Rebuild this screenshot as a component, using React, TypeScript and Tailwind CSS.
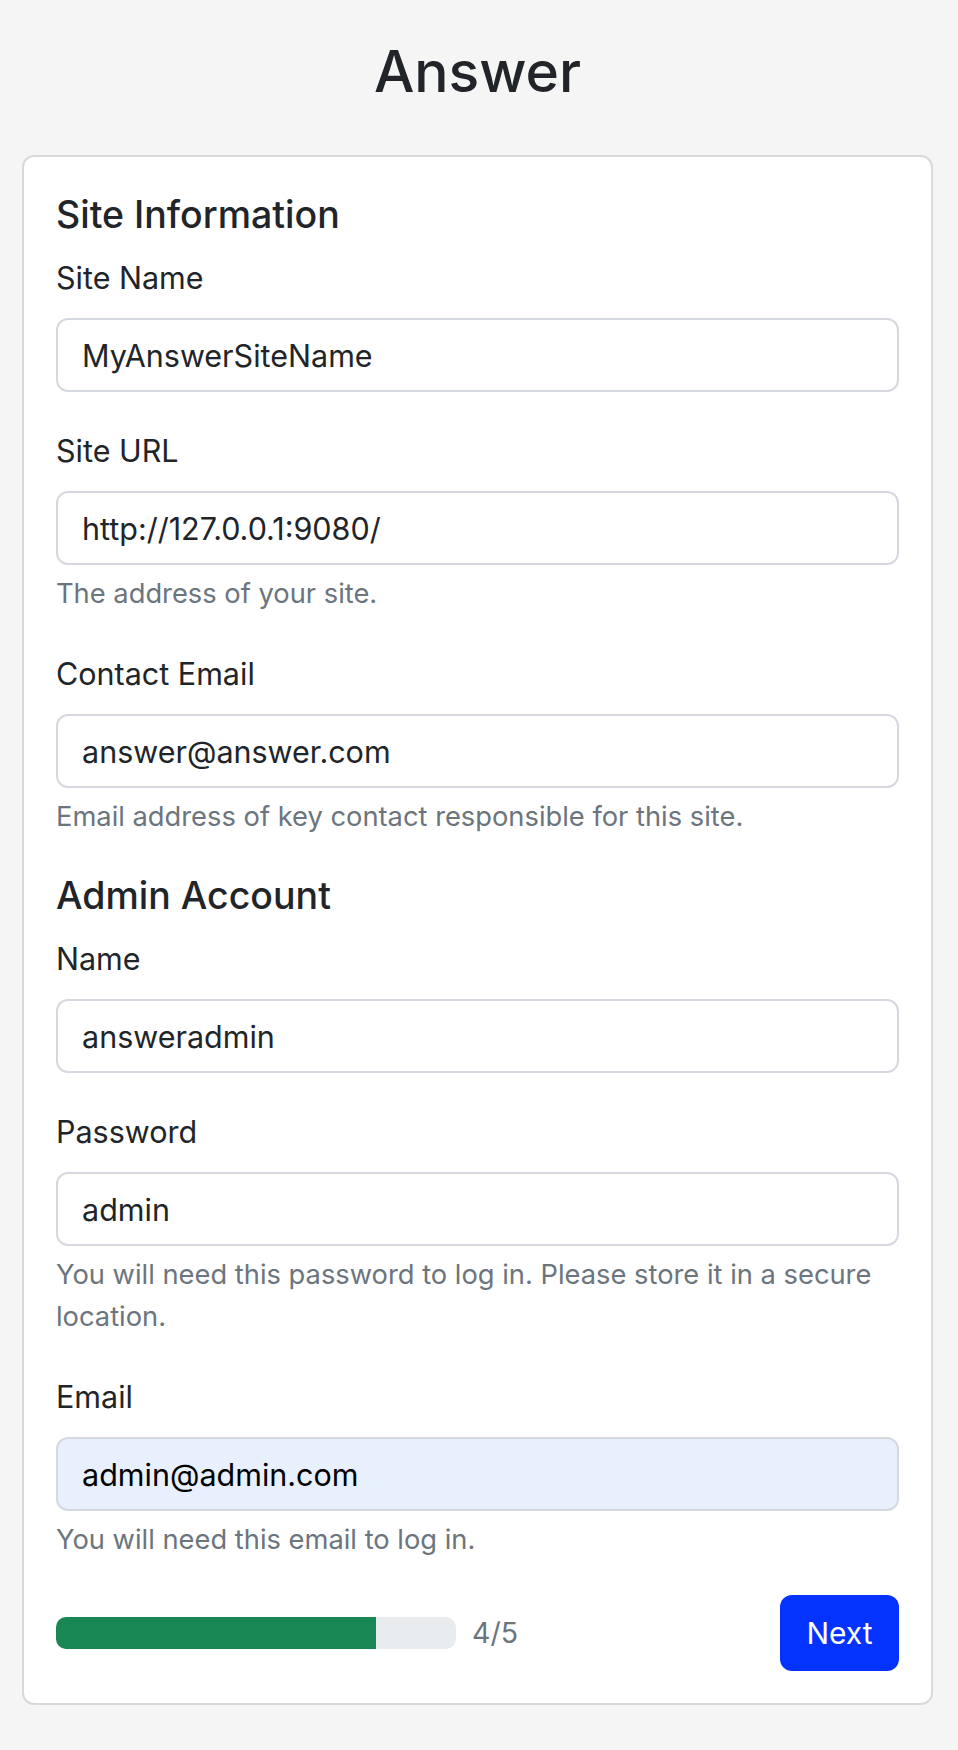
import React from "react";

type FieldProps = {
  label: string;
  value: string;
  help?: string;
  type?: string;
  autofill?: boolean;
  mb?: string;
};

function Field({ label, value, help, type = "text", autofill = false, mb = "mb-[37px]" }: FieldProps) {
  return (
    <div className={mb}>
      <label className="block text-[30.5px] leading-[44px] mb-[18px] text-[#212529]">{label}</label>
      <input
        type={type}
        readOnly
        defaultValue={value}
        className={
          "block w-full h-[74px] rounded-[12px] border-2 border-[#d5d9df] pl-[24px] pr-[24px] text-[30.5px] text-[#212529] outline-none " +
          (autofill ? "bg-[#e8f0fe] text-black" : "bg-white")
        }
      />
      {help && (
        <div className="mt-[8px] text-[27.3px] leading-[42px] text-[#6c757d]">{help}</div>
      )}
    </div>
  );
}

export default function App() {
  return (
    <div className="min-h-screen bg-[#f5f5f5] pt-[37px] pl-[22px] pr-[25px] pb-[40px] font-[Inter,'Noto_Sans',sans-serif] text-[#212529]">
      <h1 className="text-center text-[57px] leading-[70px] font-medium mb-[48px] text-[#212529]">Answer</h1>
      <div className="bg-white border-2 border-[#d9d9d9] rounded-[12px] px-[32px] pt-[34px] pb-[32px]">
        <h2 className="text-[37.5px] leading-[47px] font-medium mb-[18px]">Site Information</h2>
        <Field label="Site Name" value="MyAnswerSiteName" />
        <Field label="Site URL" value="http://127.0.0.1:9080/" help="The address of your site." />
        <Field
          label="Contact Email"
          value="answer@answer.com"
          help="Email address of key contact responsible for this site."
          mb="mb-[34px]"
        />
        <h2 className="text-[37.5px] leading-[47px] font-medium mb-[18px]">Admin Account</h2>
        <Field label="Name" value="answeradmin" />
        <Field
          label="Password"
          value="admin"
          help="You will need this password to log in. Please store it in a secure location."
        />
        <Field
          label="Email"
          value="admin@admin.com"
          help="You will need this email to log in."
          autofill
          mb="mb-[34px]"
        />
        <div className="flex items-center justify-between">
          <div className="flex items-center">
            <div className="w-[400px] h-[32px] rounded-[10px] bg-[#e9ecef] overflow-hidden">
              <div className="h-full w-[80%] bg-[#198754]" />
            </div>
            <span className="ml-[16px] text-[28.5px] leading-[44px] text-[#6c757d]">4/5</span>
          </div>
          <button className="w-[119px] h-[76px] rounded-[12px] bg-[#0433ff] text-white text-[30px] leading-[44px]">
            Next
          </button>
        </div>
      </div>
    </div>
  );
}
